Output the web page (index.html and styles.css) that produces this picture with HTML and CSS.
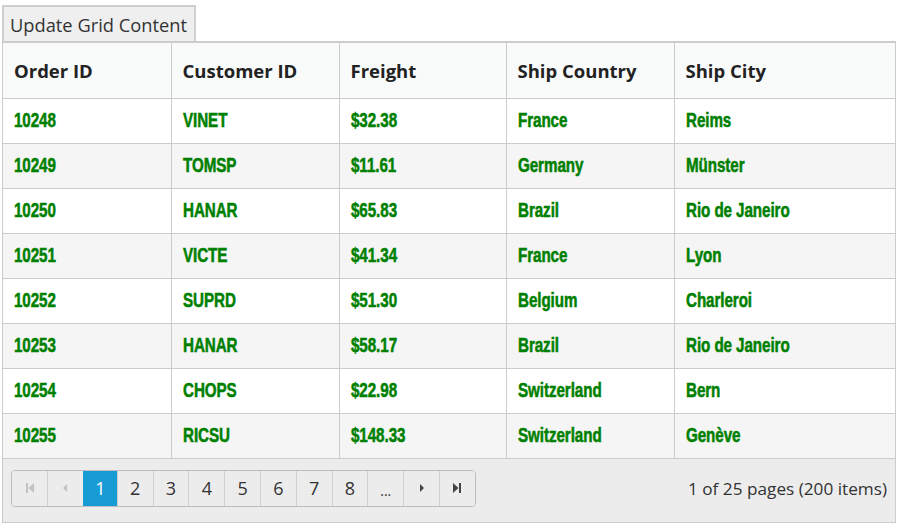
FILE: index.html
```html
<!DOCTYPE html>
<html>
<head>
<meta charset="utf-8">
<link rel="stylesheet" href="styles.css">
</head>
<body>
<div class="page">
  <button class="update-btn">Update Grid Content</button>
  <div class="grid">
    <table class="grid-table">
      <colgroup>
        <col class="c1"><col class="c2"><col class="c3"><col class="c4"><col class="c5">
      </colgroup>
      <thead>
        <tr><th>Order ID</th><th>Customer ID</th><th>Freight</th><th>Ship Country</th><th>Ship City</th></tr>
      </thead>
      <tbody>
        <tr><td><span class="v">10248</span></td><td><span class="v">VINET</span></td><td><span class="v">$32.38</span></td><td><span class="v">France</span></td><td><span class="v">Reims</span></td></tr>
        <tr class="alt"><td><span class="v">10249</span></td><td><span class="v">TOMSP</span></td><td><span class="v">$11.61</span></td><td><span class="v">Germany</span></td><td><span class="v">Münster</span></td></tr>
        <tr><td><span class="v">10250</span></td><td><span class="v">HANAR</span></td><td><span class="v">$65.83</span></td><td><span class="v">Brazil</span></td><td><span class="v">Rio de Janeiro</span></td></tr>
        <tr class="alt"><td><span class="v">10251</span></td><td><span class="v">VICTE</span></td><td><span class="v">$41.34</span></td><td><span class="v">France</span></td><td><span class="v">Lyon</span></td></tr>
        <tr><td><span class="v">10252</span></td><td><span class="v">SUPRD</span></td><td><span class="v">$51.30</span></td><td><span class="v">Belgium</span></td><td><span class="v">Charleroi</span></td></tr>
        <tr class="alt"><td><span class="v">10253</span></td><td><span class="v">HANAR</span></td><td><span class="v">$58.17</span></td><td><span class="v">Brazil</span></td><td><span class="v">Rio de Janeiro</span></td></tr>
        <tr><td><span class="v">10254</span></td><td><span class="v">CHOPS</span></td><td><span class="v">$22.98</span></td><td><span class="v">Switzerland</span></td><td><span class="v">Bern</span></td></tr>
        <tr class="alt"><td><span class="v">10255</span></td><td><span class="v">RICSU</span></td><td><span class="v">$148.33</span></td><td><span class="v">Switzerland</span></td><td><span class="v">Genève</span></td></tr>
      </tbody>
    </table>
    <div class="pager">
      <div class="pager-buttons">
        <span class="pbtn icon disabled"><svg width="10" height="12" viewBox="0 0 10 12"><rect x="1" y="1" width="2" height="10" fill="currentColor"/><path d="M9 1 L3.5 6 L9 11 Z" fill="currentColor"/></svg></span>
        <span class="pbtn icon disabled"><svg width="8" height="12" viewBox="0 0 8 12"><path d="M6 2 L2 6 L6 10 Z" fill="currentColor"/></svg></span>
        <span class="pbtn active">1</span>
        <span class="pbtn">2</span>
        <span class="pbtn">3</span>
        <span class="pbtn">4</span>
        <span class="pbtn">5</span>
        <span class="pbtn">6</span>
        <span class="pbtn">7</span>
        <span class="pbtn">8</span>
        <span class="pbtn dots">...</span>
        <span class="pbtn icon"><svg width="8" height="12" viewBox="0 0 8 12"><path d="M2 2 L6 6 L2 10 Z" fill="currentColor"/></svg></span>
        <span class="pbtn icon last"><svg width="10" height="12" viewBox="0 0 10 12"><path d="M1 1 L6.5 6 L1 11 Z" fill="currentColor"/><rect x="7" y="1" width="2" height="10" fill="currentColor"/></svg></span>
      </div>
      <div class="pager-info">1 of 25 pages (200 items)</div>
    </div>
  </div>
</div>
</body>
</html>
```
FILE: styles.css
```css
html, body {
  margin: 0;
  padding: 0;
  background: #fff;
}
.page {
  padding: 5px 4px 0 2px;
  font-family: "Open Sans", "Noto Sans", sans-serif;
  color: #333;
}
.update-btn {
  display: block;
  height: 36px;
  width: 194px;
  padding: 0 6px;
  font-family: "Open Sans", "Noto Sans", sans-serif;
  font-size: 18.3px;
  color: #333;
  background: #efefef;
  border: 2px solid #cfcfcf;
  border-bottom: none;
  text-align: left;
  white-space: nowrap;
}
.grid {
  border: 1px solid #cccccc;
  border-top: 2px solid #cccccc;
  width: 894px;
  box-sizing: border-box;
}
.grid-table {
  width: 100%;
  border-collapse: collapse;
  table-layout: fixed;
}
.c1 { width: 168px; }
.c2 { width: 168px; }
.c3 { width: 167px; }
.c4 { width: 168px; }
.c5 { width: auto; }
.grid-table th {
  height: 55px;
  padding: 0 0 0 11px;
  text-align: left;
  font-family: "Open Sans", "Noto Sans", sans-serif;
  font-weight: 700;
  font-size: 18.5px;
  color: #222;
  background: #f9fbfb;
  border-left: 1px solid #cccccc;
  border-bottom: 1px solid #cccccc;
  white-space: nowrap;
}
.grid-table th:first-child,
.grid-table td:first-child {
  border-left: none;
}
.grid-table td {
  height: 44px;
  padding: 0 0 0 11px;
  border-left: 1px solid #cccccc;
  border-bottom: 1px solid #cccccc;
  white-space: nowrap;
  overflow: hidden;
}
.v {
  display: inline-block;
  font-family: "Liberation Sans", Arial, sans-serif;
  font-weight: 700;
  font-size: 19px;
  color: #008000;
  -webkit-text-stroke: 0.5px #008000;
  letter-spacing: -0.1px;
  transform: scale(0.8, 1.05);
  transform-origin: left center;
}
.grid-table tr.alt td {
  background: #f5f5f5;
}
.pager {
  display: flex;
  align-items: center;
  justify-content: space-between;
  background: #ececec;
  padding: 10px 8px 15px 8px;
  height: 38px;
}
.pager-buttons {
  display: flex;
  border: 1px solid #bdbdbd;
  border-radius: 4px;
  overflow: hidden;
  height: 35px;
}
.pbtn {
  display: flex;
  align-items: center;
  justify-content: center;
  box-sizing: border-box;
  width: 35.8px;
  height: 35px;
  font-size: 18px;
  color: #333;
  border-left: 1px solid #cfcfcf;
  background: #ececec;
}
.pbtn:first-child {
  border-left: none;
  width: 35px;
}
.pbtn.active {
  background: #169bd5;
  color: #fff;
  border-left-color: #169bd5;
  width: 34px;
}
.pbtn.icon {
  color: #444;
}
.pbtn.icon.disabled {
  color: #c2c2c2;
}
.pbtn.dots {
  font-size: 14px;
  padding-top: 4px;
}
.pager-info {
  font-size: 17.2px;
  color: #333;
  padding-top: 1px;
}
```
